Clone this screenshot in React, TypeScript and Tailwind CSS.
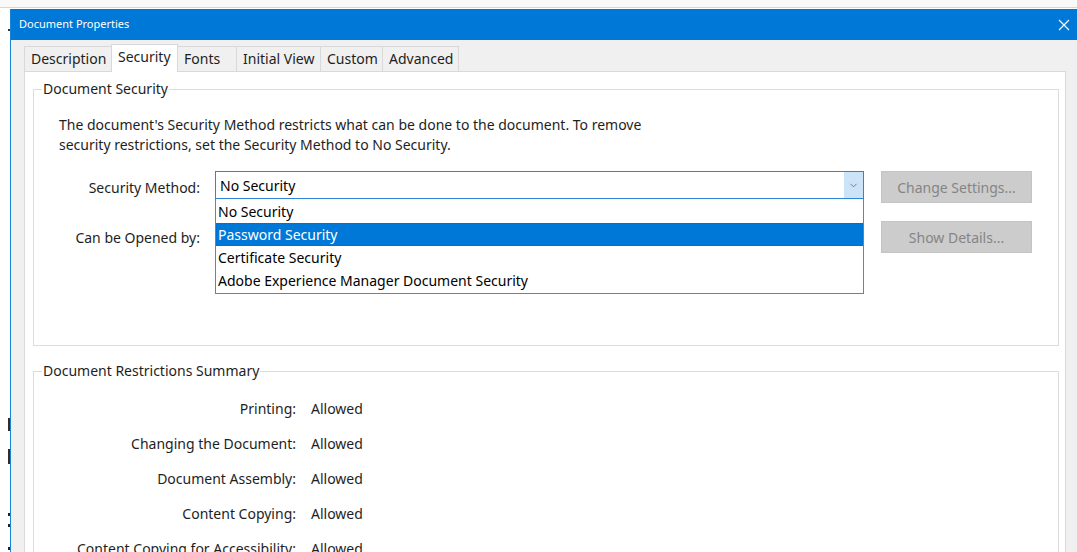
import { ChevronDown } from "lucide-react"

const tabs = [
    { label: "Description", w: "w-[88px]" },
    { label: "Security", w: "w-[67px]", active: true },
    { label: "Fonts", w: "w-[60px]" },
    { label: "Initial View", w: "w-[85px]" },
    { label: "Custom", w: "w-[63px]" },
    { label: "Advanced", w: "w-[77px]" },
]

const methods = [
    "No Security",
    "Password Security",
    "Certificate Security",
    "Adobe Experience Manager Document Security",
]

const restrictions = [
    ["Printing:", "Allowed"],
    ["Changing the Document:", "Allowed"],
    ["Document Assembly:", "Allowed"],
    ["Content Copying:", "Allowed"],
    ["Content Copying for Accessibility:", "Allowed"],
]

function DisabledButton({ children }: { children: string }) {
    return (
        <button className="w-[151px] h-[32px] bg-[#cccccc] border border-[#c4c4c4] text-[#858585] text-[14px]">
            {children}
        </button>
    )
}

function SecurityGroup() {
    return (
        <fieldset className="shrink-0 border border-[#dcdcdc] h-[265px] px-0">
            <legend className="ml-[8px] px-[1px] text-[14px] text-[#1e1e1e] leading-[16px]">Document Security</legend>
            <p className="ml-[25px] mt-[18px] text-[14px] leading-[20px] text-[#1e1e1e]">
                The document's Security Method restricts what can be done to the document. To remove
                <br />
                security restrictions, set the Security Method to No Security.
            </p>

            <div className="mt-[16px] flex items-center h-[32px]">
                <span className="w-[166px] text-right text-[14px] text-[#1e1e1e]">Security Method:</span>
                <div className="relative ml-[15px] w-[649px] h-[28px] mb-[4px]">
                    <div className="h-full border border-[#2f86d6] bg-white flex items-center">
                        <span className="flex-1 pl-[4px] text-[14px] text-black">No Security</span>
                        <span className="w-[19px] h-full bg-[#cce4f7] flex items-center justify-center">
                            <ChevronDown size={11} strokeWidth={1.5} className="text-[#555]" />
                        </span>
                    </div>
                    {/* open dropdown list */}
                    <ul className="absolute left-0 top-[28px] w-[649px] bg-white border border-[#3a8edb] border-t-0 pt-[1px] pb-[1px] z-10">
                        {methods.map((m, i) => (
                            <li
                                key={m}
                                className={`h-[23px] pl-[2px] flex items-center text-[14px] ${
                                    i === 1
                                        ? "bg-[#0078d7] text-white outline-1 outline-dotted outline-[#555] -outline-offset-1"
                                        : "text-black"
                                }`}
                            >
                                {m}
                            </li>
                        ))}
                    </ul>
                </div>
                <div className="ml-[17px]">
                    <DisabledButton>Change Settings...</DisabledButton>
                </div>
            </div>

            <div className="mt-[18px] flex items-center h-[32px]">
                <span className="w-[166px] text-right text-[14px] text-[#1e1e1e]">Can be Opened by:</span>
                <div className="ml-[15px] w-[649px]" />
                <div className="ml-[17px]">
                    <DisabledButton>Show Details...</DisabledButton>
                </div>
            </div>
        </fieldset>
    )
}

function SummaryGroup() {
    return (
        <fieldset className="mt-[17px] border border-[#dcdcdc] border-b-0 flex-1">
            <legend className="ml-[8px] px-[1px] text-[14px] text-[#1e1e1e] leading-[16px]">Document Restrictions Summary</legend>
            <div className="mt-[12px] flex flex-col">
                {restrictions.map(([label, value]) => (
                    <div key={label} className="h-[35px] shrink-0 flex items-center text-[14px] text-[#1e1e1e]">
                        <span className="w-[262px] text-right">{label}</span>
                        <span className="ml-[15px]">{value}</span>
                    </div>
                ))}
            </div>
        </fieldset>
    )
}

export default function App() {
    return (
        <div className="w-[1077px] h-[552px] overflow-hidden bg-white flex flex-col font-['Noto_Sans','Open_Sans',sans-serif]">
            <div className="h-[8px] shrink-0 bg-[#f9f9f9] border-b border-[#d6d6d6]" />
            <div className="flex flex-1 min-h-0 pt-[1px]">
                {/* bits of the window behind */}
                <div className="w-[10px] shrink-0 bg-white flex flex-col items-end">
                    <span className="mt-[20px] w-[2px] h-[2px] bg-[#333]" />
                    <span className="mt-[387px] w-[2px] h-[13px] bg-[#3a2a20]" />
                    <span className="mt-[18px] w-[2px] h-[15px] bg-[#3a2a20]" />
                    <span className="mt-[49px] w-[2px] h-[3px] bg-[#222]" />
                    <span className="mt-[8px] w-[2px] h-[3px] bg-[#222]" />
                    <span className="mt-[20px] w-[2px] h-[3px] bg-[#222]" />
                </div>
                <div className="flex-1 flex flex-col border-l border-[#1883d7] min-w-0">
                    <div className="h-[31px] shrink-0 bg-[#0078d7] flex items-center justify-between pl-[8px] pr-[7px]">
                        <span className="text-white text-[11px]">Document Properties</span>
                        <svg width="12" height="12" viewBox="0 0 12 12" className="text-white">
                            <path d="M1 1 L11 11 M11 1 L1 11" stroke="currentColor" strokeWidth="1.2" />
                        </svg>
                    </div>
                    <div className="flex-1 bg-[#f0f0f0] pl-[13px] pr-[11px] pt-[4px] flex flex-col min-h-0">
                        <div className="flex items-end h-[27px] shrink-0">
                            {tabs.map((t) => (
                                <div
                                    key={t.label}
                                    className={`${t.w} flex items-center pl-[6px] text-[14px] text-[#1e1e1e] border border-[#d9d9d9] -ml-px first:ml-0 ${
                                        t.active
                                            ? "h-[28px] bg-white border-b-0 relative z-10 -mb-px pb-[4px]"
                                            : "h-[25px] bg-[#f0f0f0] border-b-0 pb-[1px]"
                                    }`}
                                >
                                    {t.label}
                                </div>
                            ))}
                        </div>
                        <div className="flex-1 bg-white border border-[#d9d9d9] border-b-0 pl-[8px] pr-[6px] pt-[9px] flex flex-col min-h-0">
                            <SecurityGroup />
                            <SummaryGroup />
                        </div>
                    </div>
                </div>
            </div>
        </div>
    )
}
